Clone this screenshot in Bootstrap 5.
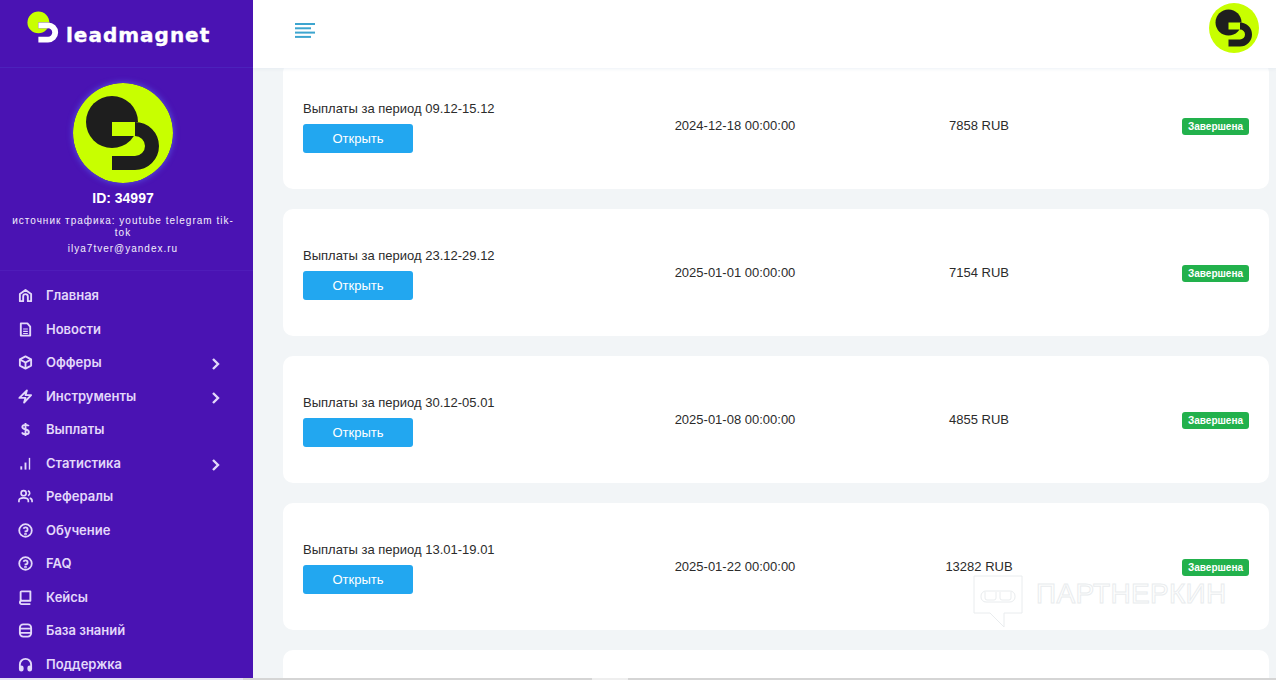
<!DOCTYPE html>
<html lang="ru">
<head>
    <meta charset="UTF-8">
    <meta name="viewport" content="width=device-width, initial-scale=1">
    <title>Выплаты</title>
    <link href="https://cdn.jsdelivr.net/npm/bootstrap@5.3.0/dist/css/bootstrap.min.css" rel="stylesheet">
    <script src="https://cdn.jsdelivr.net/npm/bootstrap@5.3.0/dist/js/bootstrap.bundle.min.js"></script>
    <style>
        html, body { height: 100%; overflow: hidden; }
        body { font-family: "Liberation Sans", Arial, sans-serif; background: #f2f5f7; color: #2b2b2b; font-size: 13px; }

        /* sidebar */
        .side-bar { width: 253px; height: 680px; background: #4a13b3; color: #fff; flex: none; overflow: hidden; }
        .side-logo { height: 68px; border-bottom: 1px solid #4c22bb; position: relative; }
        .side-logo svg { position: absolute; left: 22px; top: 6px; }
        .logo-word { position: absolute; left: 66px; top: 20px; font-family: "DejaVu Sans", sans-serif; font-weight: 700; font-size: 20px; line-height: 30px; letter-spacing: 1px; color: #fff; -webkit-text-stroke: .4px #fff; }
        .side-user { height: 203px; padding: 15px 7px 0 0; border-bottom: 1px solid #4f1cb9; text-align: center; }
        .user-pic { display: block; margin: 0 auto; border-radius: 50%; box-shadow: 0 0 6px rgba(90, 110, 240, .8); }
        .user-id { font-weight: 700; font-size: 14px; line-height: 18px; margin-top: 6px; }
        .user-src { font-size: 10px; line-height: 12px; letter-spacing: 1px; margin: 8px 10px 0; color: #f3eefc; }
        .user-mail { font-size: 10px; line-height: 12px; letter-spacing: 1px; margin-top: 4px; color: #f3eefc; }
        .side-menu { padding-top: 8px; }
        .side-item { height: 33.5px; display: flex; align-items: center; padding-left: 18px; font-family: Inter, sans-serif; font-size: 13px; font-weight: 600; color: #e3d8fa; position: relative; }
        .side-item svg.ico { width: 15px; height: 15px; margin-right: 13px; flex: none; }
        .side-item svg.arr { position: absolute; left: 211px; top: 11px; width: 10px; height: 14px; }

        /* top bar */
        .page-main { min-width: 0; height: 680px; position: relative; overflow: hidden; }
        .top-bar { height: 68px; background: #fff; box-shadow: 0 1px 3px rgba(220, 230, 240, .5); position: relative; z-index: 2; padding: 3px 17px 0 42px; }
        .burger { margin-top: 20px; }
        .pay-list { padding: 0 7px 0 30px; margin-top: -6px; }
        .pay-card { background: #fff; border-radius: 10px; height: 127px; margin-bottom: 20px; padding: 0 20px; display: grid; grid-template-columns: 310px 244px 244px 1fr; align-items: center; }
        .pay-title { line-height: 21px; margin-bottom: 5px; }
        .pay-btn { width: 110px; height: 29px; padding: 0; background: #22a7f0; border: 0; border-radius: 3px; color: #fff; font-size: 13px; }
        .pay-mid { text-align: center; }
        .pay-end { text-align: right; }
        .pay-state { display: inline-block; width: 67px; height: 17px; line-height: 17px; margin-top: 2px; text-align: center; background: #22b14c; color: #fff; border-radius: 3px; font-size: 10px; font-weight: 700; }

        /* watermark */
        .water-ico { position: absolute; left: 720px; top: 575px; z-index: 3; }
        .water-text { position: absolute; left: 783px; top: 578px; z-index: 3; font-size: 28px; line-height: 32px; letter-spacing: .3px; color: transparent; -webkit-text-stroke: 1px #e9ecee; }

        /* scrollbar edge at the very bottom */
        .bottom-strip { position: fixed; left: 0; right: 0; bottom: 0; height: 2px; z-index: 3; display: flex; background: #d5d5d5; }
        .strip-left { width: 243px; background: #e6dff5; }
        .strip-gap { width: 349px; }
        .strip-thumb { width: 36px; background: #efefef; }
    </style>
</head>
<body>
<div class="d-flex">
    <aside class="side-bar">
        <div class="side-logo">
            <svg width="42" height="42" viewBox="0 0 100 100">
                <circle cx="39" cy="39" r="26" fill="#c8ff00"/>
                <rect x="39" y="39" width="25" height="14" fill="#4a13b3"/>
                <path d="M39 87V73H62A10 10 0 0 0 62 53H39V39H62A24 24 0 0 1 62 87Z" fill="#fff"/>
            </svg>
            <span class="logo-word">leadmagnet</span>
        </div>
        <div class="side-user">
            <svg class="user-pic" width="100" height="100" viewBox="0 0 100 100">
                <circle cx="50" cy="50" r="50" fill="#c8ff00"/>
                <circle cx="39" cy="39" r="26" fill="#1e1e1e"/>
                <rect x="39" y="39" width="26" height="14" fill="#c8ff00"/>
                <path d="M39 87V73H62A10 10 0 0 0 62 53V39A24 24 0 0 1 62 87Z" fill="#1e1e1e"/>
            </svg>
            <div class="user-id">ID: 34997</div>
            <div class="user-src">источник трафика: youtube telegram tik-tok</div>
            <div class="user-mail">ilya7tver@yandex.ru</div>
        </div>
        <nav class="side-menu">
            <div class="side-item">
                <svg class="ico" viewBox="0 0 16 16" fill="none" stroke="currentColor" stroke-width="2" stroke-linejoin="round"><path d="M2 14V6.500L8 2l6 4.500V14H10.500V9a2.500 2.500 0 0 0-5 0v5Z"/></svg>Главная
            </div>
            <div class="side-item">
                <svg class="ico" viewBox="0 0 16 16" fill="none" stroke="currentColor" stroke-width="2" stroke-linejoin="round"><path d="M3 1.500h7l3 3.500v9.500H3Z"/><path d="M5.500 7.500h5M5.500 10h5M5.500 12.300h5" stroke-width="1.200"/></svg>Новости
            </div>
            <div class="side-item">
                <svg class="ico" viewBox="0 0 16 16" fill="none" stroke="currentColor" stroke-width="2" stroke-linejoin="round"><path d="M8 1.500l6 3.200v6.600l-6 3.200-6-3.200V4.700Z"/><path d="M2.300 4.900 8 8l5.700-3.100M8 8v6"/></svg>Офферы
                <svg class="arr" viewBox="0 0 10 14" fill="none" stroke="currentColor" stroke-width="2.400"><path d="M2 2l5 5-5 5"/></svg>
            </div>
            <div class="side-item">
                <svg class="ico" viewBox="0 0 16 16" fill="none" stroke="currentColor" stroke-width="2" stroke-linejoin="round"><path d="M9.500 1.500 8 6.500h6L6.500 14.500 8 9.500H1.500Z"/></svg>Инструменты
                <svg class="arr" viewBox="0 0 10 14" fill="none" stroke="currentColor" stroke-width="2.400"><path d="M2 2l5 5-5 5"/></svg>
            </div>
            <div class="side-item">
                <svg class="ico" viewBox="0 0 16 16" fill="none" stroke="currentColor" stroke-width="2"><path d="M8 1v14M11.500 4.500C11 3.300 9.700 3 8 3 6 3 4.600 3.900 4.600 5.400 4.600 9 11.600 7 11.600 10.600 11.600 12.100 10 13 8 13 6 13 4.800 12.400 4.300 11"/></svg>Выплаты
            </div>
            <div class="side-item">
                <svg class="ico" viewBox="0 0 16 16" fill="currentColor"><rect x="2.500" y="11" width="2" height="3.500"/><rect x="7" y="7" width="2" height="7.500"/><rect x="11.500" y="2" width="1.500" height="12.500"/></svg>Статистика
                <svg class="arr" viewBox="0 0 10 14" fill="none" stroke="currentColor" stroke-width="2.400"><path d="M2 2l5 5-5 5"/></svg>
            </div>
            <div class="side-item">
                <svg class="ico" viewBox="0 0 16 16" fill="none" stroke="currentColor" stroke-width="1.800"><circle cx="6" cy="4.500" r="2.700"/><path d="M1 14v-1.500C1 10.500 3 9.500 6 9.500s5 1 5 3V14M10.500 2c1.300.3 2 1.300 2 2.500s-.7 2.200-2 2.500M12.500 9.800c1.600.4 2.500 1.400 2.500 2.700V14"/></svg>Рефералы
            </div>
            <div class="side-item">
                <svg class="ico" viewBox="0 0 16 16" fill="none" stroke="currentColor" stroke-width="1.900"><circle cx="8" cy="8" r="6.700"/><path d="M5.900 6.200A2.200 2.200 0 1 1 8 9v.8"/><circle cx="8" cy="11.800" r=".5"/></svg>Обучение
            </div>
            <div class="side-item">
                <svg class="ico" viewBox="0 0 16 16" fill="none" stroke="currentColor" stroke-width="1.900"><circle cx="8" cy="8" r="6.700"/><path d="M5.900 6.200A2.200 2.200 0 1 1 8 9v.8"/><circle cx="8" cy="11.800" r=".5"/></svg>FAQ
            </div>
            <div class="side-item">
                <svg class="ico" viewBox="0 0 16 16" fill="none" stroke="currentColor" stroke-width="2" stroke-linejoin="round"><path d="M2.800 12.500V2.500a1 1 0 0 1 1-1h9.400v10H3.800a1.500 1.500 0 0 0 0 3.500h9.400"/></svg>Кейсы
            </div>
            <div class="side-item">
                <svg class="ico" viewBox="0 0 16 16" fill="none" stroke="currentColor" stroke-width="2"><rect x="2" y="1.500" width="12" height="13" rx="3.500"/><path d="M2 6h12M2 10.500h12"/></svg>База знаний
            </div>
            <div class="side-item">
                <svg class="ico" viewBox="0 0 16 16" fill="none" stroke="currentColor" stroke-width="2"><path d="M2 12V8a6 6 0 0 1 12 0v4"/><rect x="2" y="10" width="3" height="4.500" rx="1.500" fill="currentColor"/><rect x="11" y="10" width="3" height="4.500" rx="1.500" fill="currentColor"/></svg>Поддержка
            </div>
        </nav>
    </aside>

    <main class="page-main flex-grow-1">
        <header class="top-bar d-flex justify-content-between align-items-start">
            <svg class="burger" width="20" height="15" viewBox="0 0 20 15" fill="#3da5cf"><rect y="0" width="20" height="2"/><rect y="4.300" width="16" height="2"/><rect y="8.600" width="20" height="2"/><rect y="12.900" width="16" height="2"/></svg>
            <svg width="50" height="50" viewBox="0 0 100 100">
                <circle cx="50" cy="50" r="50" fill="#c8ff00"/>
                <circle cx="39" cy="39" r="26" fill="#1e1e1e"/>
                <rect x="39" y="39" width="26" height="14" fill="#c8ff00"/>
                <path d="M39 87V73H62A10 10 0 0 0 62 53V39A24 24 0 0 1 62 87Z" fill="#1e1e1e"/>
            </svg>
        </header>

        <div class="pay-list">
            <div class="pay-card">
                <div><div class="pay-title">Выплаты за период 09.12-15.12</div><button class="btn pay-btn">Открыть</button></div>
                <div class="pay-mid">2024-12-18 00:00:00</div>
                <div class="pay-mid">7858 RUB</div>
                <div class="pay-end"><span class="pay-state">Завершена</span></div>
            </div>
            <div class="pay-card">
                <div><div class="pay-title">Выплаты за период 23.12-29.12</div><button class="btn pay-btn">Открыть</button></div>
                <div class="pay-mid">2025-01-01 00:00:00</div>
                <div class="pay-mid">7154 RUB</div>
                <div class="pay-end"><span class="pay-state">Завершена</span></div>
            </div>
            <div class="pay-card">
                <div><div class="pay-title">Выплаты за период 30.12-05.01</div><button class="btn pay-btn">Открыть</button></div>
                <div class="pay-mid">2025-01-08 00:00:00</div>
                <div class="pay-mid">4855 RUB</div>
                <div class="pay-end"><span class="pay-state">Завершена</span></div>
            </div>
            <div class="pay-card">
                <div><div class="pay-title">Выплаты за период 13.01-19.01</div><button class="btn pay-btn">Открыть</button></div>
                <div class="pay-mid">2025-01-22 00:00:00</div>
                <div class="pay-mid">13282 RUB</div>
                <div class="pay-end"><span class="pay-state">Завершена</span></div>
            </div>
            <div class="pay-card"></div>
        </div>

        <svg class="water-ico" width="50" height="53" viewBox="0 0 50 53" fill="none" stroke="#e9ecee" stroke-width="1"><path d="M1 1h48v37H31L31 52 17 38H1Z"/><rect x="8" y="16" width="34" height="11" rx="5"/><path d="M12 17v6a2 2 0 0 0 2 2h7a2 2 0 0 0 2-2v-6M27 17v6a2 2 0 0 0 2 2h7a2 2 0 0 0 2-2v-6"/></svg>
        <div class="water-text">ПАРТНЕРКИН</div>
    </main>
</div>
<div class="bottom-strip"><div class="strip-left"></div><div class="strip-gap"></div><div class="strip-thumb"></div></div>
</body>
</html>
